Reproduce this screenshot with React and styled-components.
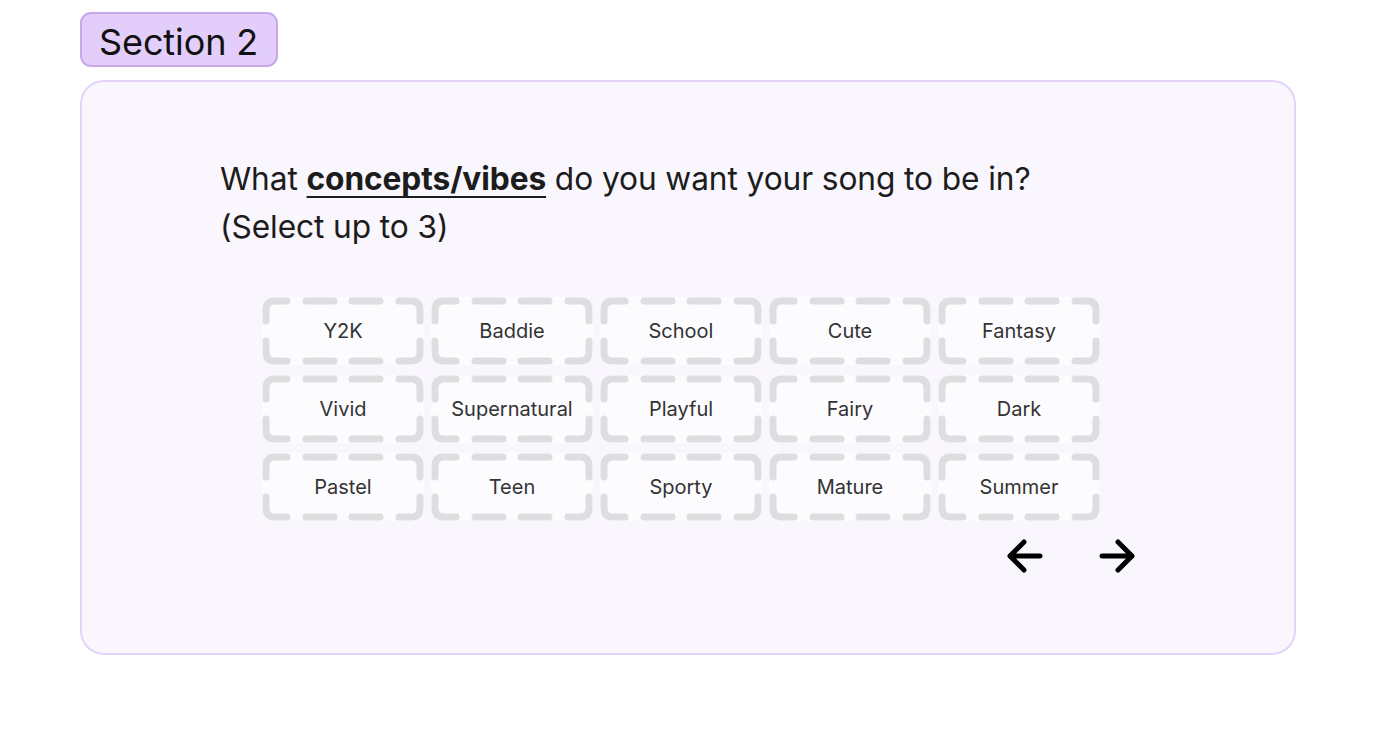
import React from 'react'
import styled, { createGlobalStyle } from 'styled-components'

const GlobalStyle = createGlobalStyle`
    html, body {
        margin: 0;
        padding: 0;
        background: #ffffff;
        font-family: Inter, "Noto Sans", sans-serif;
    }
`;

const vibes = [
    'Y2K', 'Baddie', 'School', 'Cute', 'Fantasy',
    'Vivid', 'Supernatural', 'Playful', 'Fairy', 'Dark',
    'Pastel', 'Teen', 'Sporty', 'Mature', 'Summer',
]

function DashedFrame() {
    return (
        <FrameSvg width="162" height="68" viewBox="0 0 162 68" fill="none"
            stroke="#dedddf" strokeWidth="7" strokeLinecap="round" strokeLinejoin="round">
            <path d="M4 24V13Q4 4 13 4H25" />
            <path d="M137 4H149Q158 4 158 13V24" />
            <path d="M158 44V55Q158 64 149 64H137" />
            <path d="M25 64H13Q4 64 4 55V44" />
            <path d="M44 4H72M90 4H118" />
            <path d="M44 64H72M90 64H118" />
        </FrameSvg>
    )
}

function Arrow({ dir }) {
    const d = dir === 'left'
        ? 'M6 17H36M6 17L20 3M6 17L20 31'
        : 'M36 17H6M36 17L22 3M36 17L22 31'
    return (
        <svg width="42" height="34" viewBox="0 0 42 34" fill="none"
            stroke="#000" strokeWidth="5" strokeLinecap="round" strokeLinejoin="round">
            <path d={d} />
        </svg>
    )
}

function App() {
    return (
        <PageStyled>
            <GlobalStyle />
            <Badge>Section 2</Badge>
            <Card>
                <Question>
                    What <strong>concepts/vibes</strong> do you want your song to be in?
                    <br />
                    (Select up to 3)
                </Question>
                <Grid>
                    {vibes.map(v => (
                        <Tile key={v}>
                            <DashedFrame />
                            <span>{v}</span>
                        </Tile>
                    ))}
                </Grid>
                <Nav>
                    <NavButton aria-label="Previous"><Arrow dir="left" /></NavButton>
                    <NavButton aria-label="Next"><Arrow dir="right" /></NavButton>
                </Nav>
            </Card>
        </PageStyled>
    )
}

const PageStyled = styled.div`
    padding: 12px 80px 0 80px;
    display: flex;
    flex-direction: column;
    align-items: flex-start;
    gap: 13px;
`;

const Badge = styled.div`
    box-sizing: border-box;
    height: 55px;
    padding: 5px 18px 0 17px;
    display: flex;
    align-items: center;
    background: #e3cdfb;
    border: 2px solid #c8a9e8;
    border-radius: 11px;
    font-size: 36px;
    color: #111;
    letter-spacing: -0.1px;
`;

const Card = styled.div`
    box-sizing: border-box;
    align-self: stretch;
    height: 575px;
    background: #f9f6fe;
    border: 2px solid #e4d3fa;
    border-radius: 24px;
    padding: 73px 0 0 138px;
    display: flex;
    flex-direction: column;
    align-items: flex-start;
`;

const Question = styled.p`
    margin: 0;
    font-size: 31.7px;
    line-height: 48px;
    color: #1c1c1c;
    letter-spacing: -0.1px;
    strong {
        font-weight: 700;
        text-decoration: underline;
        text-decoration-thickness: 2px;
        text-underline-offset: 6px;
    }
`;

const Grid = styled.div`
    margin: 46px 0 0 42px;
    display: grid;
    grid-template-columns: repeat(5, 162px);
    grid-auto-rows: 68px;
    column-gap: 7px;
    row-gap: 10px;
`;

const Tile = styled.div`
    position: relative;
    display: flex;
    align-items: center;
    justify-content: center;
    background: #fcfbfe;
    border-radius: 12px;
    font-size: 20px;
    color: #333333;
    span {
        position: relative;
    }
`;

const FrameSvg = styled.svg`
    position: absolute;
    inset: 0;
`;

const Nav = styled.div`
    width: 877px;
    margin: 17px 0 0 42px;
    display: flex;
    justify-content: flex-end;
    gap: 48px;
`;

const NavButton = styled.button`
    width: 44px;
    height: 36px;
    padding: 0;
    border: none;
    background: transparent;
    display: flex;
    align-items: center;
    justify-content: center;
    cursor: pointer;
`;

export default App
